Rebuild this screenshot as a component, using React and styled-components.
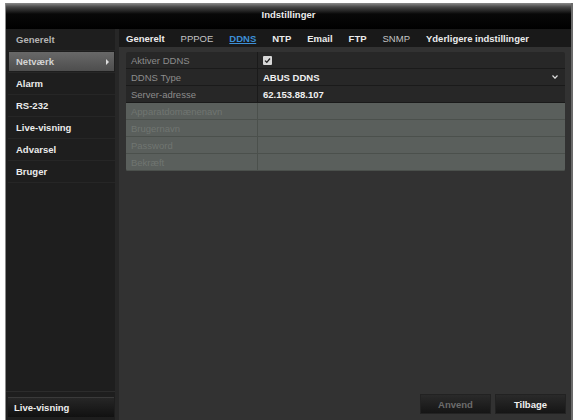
import React from 'react';
import styled, { createGlobalStyle } from 'styled-components';

const GlobalStyle = createGlobalStyle`
  html, body {
    margin: 0;
    padding: 0;
    background: #fff;
    font-family: "Liberation Sans", Arial, sans-serif;
  }
`;

const Window = styled.div`
  box-sizing: border-box;
  margin: 3px 5px 0 5px;
  width: 568px;
  height: 417px;
  display: flex;
  flex-direction: column;
  background: #323232;
  border-left: 1px solid #8a8a8a;
  border-right: 2px solid #6a6a6a;
  overflow: hidden;
`;

const TitleBar = styled.div`
  height: 26px;
  flex: none;
  background: linear-gradient(#8a8a8a 0px, #474747 4px, #080808 11px, #000 26px);
  color: #ececec;
  font-size: 9.5px;
  font-weight: bold;
  text-align: center;
  line-height: 24px;
`;

const Body = styled.div`
  flex: 1;
  display: flex;
  min-height: 0;
`;

const Sidebar = styled.div`
  width: 109px;
  flex: none;
  display: flex;
  flex-direction: column;
  justify-content: space-between;
  background: #1e1e1e;
  border-right: 4px solid #272727;
`;

const Menu = styled.div`
  display: flex;
  flex-direction: column;
`;

const MenuItem = styled.div`
  height: 21px;
  margin: 0 0 0 2px;
  padding: 0 6px 0 8px;
  display: flex;
  align-items: center;
  justify-content: space-between;
  font-size: 9.5px;
  font-weight: bold;
  color: ${({ $dim }) => ($dim ? '#b4b4b4' : '#ececec')};
  border-bottom: 1px solid #262626;
  background: ${({ $active }) =>
    $active ? 'linear-gradient(#6a6a6a, #4c4c4c)' : 'transparent'};
  box-shadow: ${({ $active }) => ($active ? 'inset 0 0 0 1px #1e1e1e' : 'none')};
  ${({ $active }) => $active && 'color: #d4d4d4;'}
`;

const Caret = styled.span`
  width: 0;
  height: 0;
  border-top: 3px solid transparent;
  border-bottom: 3px solid transparent;
  border-left: 3px solid #ddd;
`;

const Footer = styled.div`
  border-top: 1px solid #2c2c2c;
  padding-top: 5px;
`;

const LiveButton = styled.div`
  margin: 0 1px 3px 2px;
  height: 19px;
  padding-left: 6px;
  display: flex;
  align-items: center;
  font-size: 9.5px;
  font-weight: bold;
  color: #eee;
  border-top: 1px solid #3a3a3a;
  background: linear-gradient(#262626, #111);
`;

const Main = styled.div`
  flex: 1;
  display: flex;
  flex-direction: column;
  background: #323232;
`;

const Tabs = styled.div`
  height: 18px;
  flex: none;
  display: flex;
  align-items: center;
  gap: 16px;
  padding-left: 7px;
  background: #191919;
`;

const Tab = styled.span`
  font-size: 9.5px;
  font-weight: ${({ $light }) => ($light ? 'normal' : 'bold')};
  color: ${({ $active, $light }) => ($active ? '#3d8fd6' : $light ? '#c4c4c4' : '#ececec')};
  text-decoration: ${({ $active }) => ($active ? 'underline' : 'none')};
`;

const Table = styled.div`
  margin: 5px 6px 0 7px;
  border-radius: 2px;
  overflow: hidden;
  display: flex;
  flex-direction: column;
`;

const Row = styled.div`
  display: grid;
  grid-template-columns: 132px 1fr;
  height: 16px;
  border-bottom: 1px solid ${({ $off }) => ($off ? '#4b504c' : '#1a1a1a')};
  background: ${({ $off }) => ($off ? '#5a5f5c' : '#272727')};
  font-size: 9.5px;
`;

const Label = styled.div`
  padding-left: 5px;
  display: flex;
  align-items: center;
  color: ${({ $off }) => ($off ? '#707571' : '#8c8c8c')};
  border-right: 1px solid ${({ $off }) => ($off ? '#4b504c' : '#1a1a1a')};
`;

const Value = styled.div`
  padding: 0 7px 0 5px;
  display: flex;
  align-items: center;
  justify-content: space-between;
  color: #f0f0f0;
  font-weight: bold;
`;

const Check = styled.span`
  width: 9px;
  height: 9px;
  border-radius: 1px;
  background: #d8d8d8;
  display: flex;
  align-items: center;
  justify-content: center;
`;

const Spacer = styled.div`
  flex: 1;
`;

const Actions = styled.div`
  display: flex;
  justify-content: flex-end;
  gap: 4px;
  padding: 0 5px 6px 0;
`;

const Button = styled.div`
  width: 69px;
  height: 18px;
  display: flex;
  align-items: center;
  justify-content: center;
  font-size: 9.5px;
  font-weight: bold;
  color: ${({ $disabled }) => ($disabled ? '#6c6c6c' : '#f0f0f0')};
  background: linear-gradient(#2a2a2a, #151515);
  border: 1px solid #222;
`;

const menu = ['Generelt', 'Netværk', 'Alarm', 'RS-232', 'Live-visning', 'Advarsel', 'Bruger'];
const tabs = [
  { name: 'Generelt' },
  { name: 'PPPOE', light: true },
  { name: 'DDNS', active: true },
  { name: 'NTP' },
  { name: 'Email' },
  { name: 'FTP' },
  { name: 'SNMP', light: true },
  { name: 'Yderligere indstillinger' },
];
const disabledRows = ['Apparatdomænenavn', 'Brugernavn', 'Password', 'Bekræft'];

export default function App() {
  return (
    <>
      <GlobalStyle />
      <Window>
        <TitleBar>Indstillinger</TitleBar>
        <Body>
          <Sidebar>
            <Menu>
              {menu.map((m, i) => (
                <MenuItem key={m} $active={i === 1} $dim={i === 0}>
                  {m}
                  {i === 1 && <Caret />}
                </MenuItem>
              ))}
            </Menu>
            <Footer>
              <LiveButton>Live-visning</LiveButton>
            </Footer>
          </Sidebar>
          <Main>
            <Tabs>
              {tabs.map((t) => (
                <Tab key={t.name} $active={t.active} $light={t.light}>
                  {t.name}
                </Tab>
              ))}
            </Tabs>
            <Table>
              <Row>
                <Label>Aktiver DDNS</Label>
                <Value>
                  <Check>
                    <svg width="7" height="7" viewBox="0 0 7 7">
                      <path d="M1 3.6 L2.8 5.3 L6 1.5" fill="none" stroke="#222" strokeWidth="1.3" />
                    </svg>
                  </Check>
                </Value>
              </Row>
              <Row>
                <Label>DDNS Type</Label>
                <Value>
                  ABUS DDNS
                  <svg width="6" height="4" viewBox="0 0 6 4">
                    <path d="M0.5 0.5 L3 3.2 L5.5 0.5" fill="none" stroke="#ddd" strokeWidth="1.2" />
                  </svg>
                </Value>
              </Row>
              <Row>
                <Label>Server-adresse</Label>
                <Value>62.153.88.107</Value>
              </Row>
              {disabledRows.map((r) => (
                <Row key={r} $off>
                  <Label $off>{r}</Label>
                  <Value />
                </Row>
              ))}
            </Table>
            <Spacer />
            <Actions>
              <Button $disabled>Anvend</Button>
              <Button>Tilbage</Button>
            </Actions>
          </Main>
        </Body>
      </Window>
    </>
  );
}
